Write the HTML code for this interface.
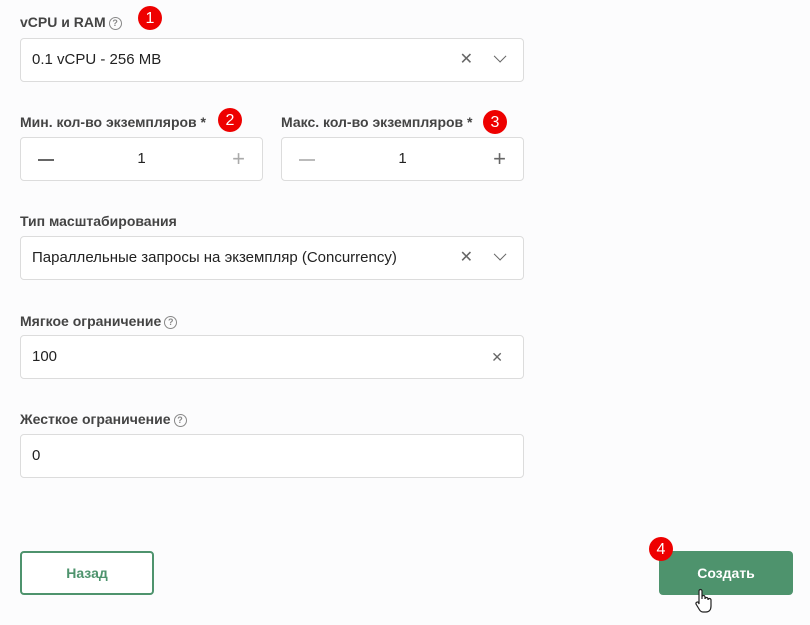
<!DOCTYPE html><html><head><meta charset="utf-8"><style>
body{margin:0;width:810px;height:625px;background:#fcfcfd;font-family:"Liberation Sans",sans-serif;position:relative;overflow:hidden;color:#222}
.l{position:absolute;font-size:14px;font-weight:bold;color:#444}
.q{display:inline-block;width:11px;height:11px;border:1.5px solid #888;border-radius:50%;font-size:9px;line-height:11px;text-align:center;color:#888;vertical-align:1px;margin-left:3px}
.i{position:absolute;background:#fff;border:1px solid #dcdcdc;border-radius:4px;height:44px;box-sizing:border-box;font-size:15px;line-height:42px;padding-left:11px;color:#222}
.x{position:absolute;right:50px;top:0;color:#666;font-size:16px}
.v{position:absolute;right:17px;top:17px;width:8px;height:8px;border-right:1.6px solid #666;border-bottom:1.6px solid #666;transform:rotate(45deg) translate(-4px,-2px)}
.b{position:absolute;width:24px;height:24px;border-radius:50%;background:#e00;color:#fff;font-size:16px;text-align:center;line-height:25px}
.btn{position:absolute;top:551px;height:44px;width:134px;box-sizing:border-box;border-radius:4px;font-size:14px;font-weight:bold;text-align:center;line-height:44px}
</style></head><body>
<div class="l" style="left:20px;top:14px">vCPU и RAM<span class="q">?</span></div>
<div class="b" style="left:138px;top:6px">1</div>
<div class="i" style="left:20px;top:38px;width:504px">0.1 vCPU - 256 MB<span class="x">✕</span><span class="v"></span></div>
<div class="l" style="left:20px;top:114px">Мин. кол-во экземпляров *</div>
<div class="b" style="left:218px;top:108px">2</div>
<div class="i" style="left:20px;top:137px;width:243px;padding:0;text-align:center"><span style="position:absolute;left:17px;top:21px;width:16px;height:1.5px;background:#666"></span>1<span style="position:absolute;right:17px;color:#aaa;font-size:22px">+</span></div>
<div class="l" style="left:281px;top:114px">Макс. кол-во экземпляров *</div>
<div class="b" style="left:483px;top:110px">3</div>
<div class="i" style="left:281px;top:137px;width:243px;padding:0;text-align:center"><span style="position:absolute;left:17px;top:21px;width:16px;height:1.5px;background:#bbb"></span>1<span style="position:absolute;right:17px;color:#666;font-size:22px">+</span></div>
<div class="l" style="left:20px;top:213px">Тип масштабирования</div>
<div class="i" style="left:20px;top:236px;width:504px">Параллельные запросы на экземпляр (Concurrency)<span class="x">✕</span><span class="v"></span></div>
<div class="l" style="left:20px;top:313px">Мягкое ограничение<span class="q">?</span></div>
<div class="i" style="left:20px;top:335px;width:504px">100<span class="x" style="right:20px;font-size:14px">✕</span></div>
<div class="l" style="left:20px;top:411px">Жесткое ограничение<span class="q">?</span></div>
<div class="i" style="left:20px;top:434px;width:504px">0</div>
<div class="btn" style="left:20px;border:2px solid #4e936d;color:#4e936d;background:#fff;line-height:40px">Назад</div>
<div class="btn" style="left:659px;background:#4e936d;color:#fff">Создать</div>
<div class="b" style="left:649px;top:537px">4</div>
<svg style="position:absolute;left:694px;top:588px" width="20" height="26" viewBox="0 0 20 26"><path d="M5 14V3a1.5 1.5 0 0 1 3 0v8V9a1.5 1.5 0 0 1 3 0v2a1.5 1.5 0 0 1 3 0v1a1.5 1.5 0 0 1 3 0v6c0 4-2 6-5 6H9c-2 0-3-1-4-3l-3-5a1.5 1.5 0 0 1 2.5-1.5L5 16z" fill="#fff" stroke="#222" stroke-width="1.2"/></svg>
</body></html>
